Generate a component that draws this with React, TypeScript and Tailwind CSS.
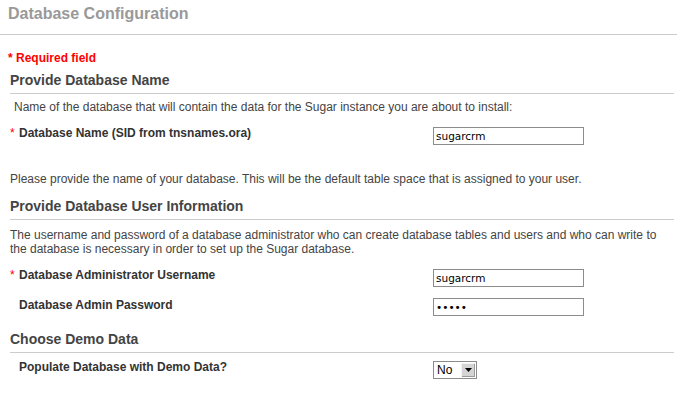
import React from "react";

const font = { fontFamily: '"Liberation Sans", Arial, sans-serif' };

function Heading({ children, className = "" }: { children: React.ReactNode; className?: string }) {
  return (
    <div className={`ml-[10px] mr-[3px] border-b border-[#cccccc] pb-[4px] text-[14px] leading-[17px] font-bold text-[#444444] ${className}`}>
      {children}
    </div>
  );
}

function TextInput({ value, type = "text", className = "" }: { value: string; type?: string; className?: string }) {
  return (
    <input
      type={type}
      value={value}
      readOnly
      className={`h-[18px] w-[151px] border border-[#8c8c8c] bg-white px-[2px] text-[10.5px] text-black outline-none ${className}`}
      style={{ fontFamily: '"DejaVu Sans", Verdana, sans-serif' }}
    />
  );
}

function Label({ children, required = false }: { children: React.ReactNode; required?: boolean }) {
  return (
    <div className="flex w-[423px] shrink-0 text-[12px] leading-[14px] font-bold text-[#333333]">
      <span className="w-[9px] font-normal text-[#ff0000]">{required ? "*" : ""}</span>
      <span>{children}</span>
    </div>
  );
}

export default function App() {
  return (
    <div className="h-[397px] w-[677px] overflow-hidden bg-white" style={font}>
      <div className="h-[35px] border-b border-[#cccccc] pl-[8px] pt-[4px] text-[16px] leading-[20px] font-bold text-[#999999]">
        Database Configuration
      </div>

      <div className="ml-[8px] mt-[16px] text-[12px] leading-[14px] font-bold text-[#ff0000]">* Required field</div>

      <Heading className="mt-[7px]">Provide Database Name</Heading>

      <div className="ml-[14px] mt-[6px] text-[12px] leading-[14px] text-[#444444]">
        Name of the database that will contain the data for the Sugar instance you are about to install:
      </div>

      <div className="ml-[10px] mt-[12px] flex items-start">
        <Label required>Database Name (SID from tnsnames.ora)</Label>
        <TextInput value="sugarcrm" className="mt-[1px]" />
      </div>

      <div className="ml-[10px] mt-[27px] text-[12px] leading-[14px] text-[#444444]">
        Please provide the name of your database. This will be the default table space that is assigned to your user.
      </div>

      <Heading className="mt-[12px]">Provide Database User Information</Heading>

      <div className="ml-[10px] mr-[3px] mt-[8px] text-[12px] leading-[14px] text-[#444444]">
        The username and password of a database administrator who can create database tables and users and who can write to the database is necessary in order to set up the Sugar database.
      </div>

      <div className="ml-[10px] mt-[12px] flex items-start">
        <Label required>Database Administrator Username</Label>
        <TextInput value="sugarcrm" className="mt-[1px]" />
      </div>

      <div className="ml-[10px] mt-[11px] flex items-start">
        <Label>Database Admin Password</Label>
        <TextInput value="sugar" type="password" />
      </div>

      <Heading className="mt-[15px]">Choose Demo Data</Heading>

      <div className="ml-[10px] mt-[7px] flex items-start">
        <Label>Populate Database with Demo Data?</Label>
        <div className="mt-[1px] flex h-[18px] w-[44px] items-stretch border border-[#8c8c8c] bg-white">
          <span className="flex-1 pl-[3px] text-[12px] leading-[16px] text-black">No</span>
          <span className="my-[1px] mr-[1px] flex w-[14px] items-center justify-center bg-[#d4d4d4] shadow-[inset_1px_1px_0_#f4f4f4,inset_-1px_-1px_0_#9a9a9a]">
            <svg width="7" height="4" viewBox="0 0 7 4">
              <path d="M0 0h7L3.5 4z" fill="#000" />
            </svg>
          </span>
        </div>
      </div>
    </div>
  );
}
